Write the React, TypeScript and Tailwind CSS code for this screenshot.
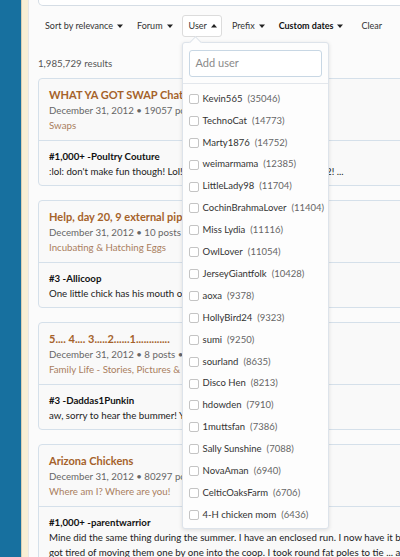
import React from "react";

const FONT = "font-['Segoe_UI','Lato','Noto_Sans',sans-serif]";

const users: [string, string][] = [
  ["Kevin565", "35046"],
  ["TechnoCat", "14773"],
  ["Marty1876", "14752"],
  ["weimarmama", "12385"],
  ["LittleLady98", "11704"],
  ["CochinBrahmaLover", "11404"],
  ["Miss Lydia", "11116"],
  ["OwlLover", "11054"],
  ["JerseyGiantfolk", "10428"],
  ["aoxa", "9378"],
  ["HollyBird24", "9323"],
  ["sumi", "9250"],
  ["sourland", "8635"],
  ["Disco Hen", "8213"],
  ["hdowden", "7910"],
  ["1muttsfan", "7386"],
  ["Sally Sunshine", "7088"],
  ["NovaAman", "6940"],
  ["CelticOaksFarm", "6706"],
  ["4-H chicken mom", "6436"],
];

interface Result {
  title: string;
  meta: string;
  forum: string;
  post: string;
  lines: string[];
}

const results: Result[] = [
  {
    title: "WHAT YA GOT SWAP Chat Thread - Part 12",
    meta: "December 31, 2012 • 19057 posts • 201,395 views",
    forum: "Swaps",
    post: "#1,000+ -Poultry Couture",
    lines: [":lol: don't make fun though! Lol! Happy New Year to you all, 2013 2! ..."],
  },
  {
    title: "Help, day 20, 9 external pips",
    meta: "December 31, 2012 • 10 posts • 849 views",
    forum: "Incubating & Hatching Eggs",
    post: "#3 -Allicoop",
    lines: ["One little chick has his mouth out of the shell and is breathing."],
  },
  {
    title: "5.... 4.... 3.....2......1.............",
    meta: "December 31, 2012 • 8 posts • 855 views",
    forum: "Family Life - Stories, Pictures & Updates",
    post: "#3 -Daddas1Punkin",
    lines: ["aw, sorry to hear the bummer! You have a good new year!"],
  },
  {
    title: "Arizona Chickens",
    meta: "December 31, 2012 • 80297 posts • 2,011,364 views",
    forum: "Where am I? Where are you!",
    post: "#1,000+ -parentwarrior",
    lines: [
      "Mine did the same thing during the summer. I have an enclosed run. I now have it blocked off so they",
      "got tired of moving them one by one into the coop. I took round fat poles to tie ... and more",
    ],
  },
];

const Caret = ({ up = false }: { up?: boolean }) => (
  <svg width="6" height="4" viewBox="0 0 6 4" className="ml-[4px] shrink-0">
    {up ? <path d="M0 3.5 L3 0 L6 3.5 Z" fill="#222" /> : <path d="M0 0.5 L6 0.5 L3 4 Z" fill="#222" />}
  </svg>
);

const UserDropdown = () => (
  <div className="absolute left-[-1px] top-[26px] w-[147px] h-[487px] bg-[#fdfdfd] border border-[#dde3ea] rounded-[3px] shadow-[0_1px_4px_rgba(0,0,0,0.12)] z-10">
    <div className="absolute left-[8px] top-[-5px] w-[9px] h-[9px] rotate-45 bg-[#fdfdfd] border-l border-t border-[#dde3ea]" />
    <div className="px-[6px] pt-[7px] pb-[6px] border-b border-[#e3e7ec]">
      <div className="h-[27px] border border-[#c8d7e4] rounded-[3px] bg-white flex items-center px-[6px] text-[11px] text-[#8a8a8a]">
        Add user
      </div>
    </div>
    <div className="pt-[4px]">
      {users.map(([name, count]) => (
        <div key={name} className="h-[21.9px] flex items-center pl-[6px] text-[9.5px] whitespace-nowrap">
          <span className="w-[10px] h-[10px] shrink-0 border border-[#c4c4c4] rounded-[2px] bg-white mr-[4px]" />
          <span className="text-[#333]">{name}</span>
          <span className="text-[#666] ml-[5px]">({count})</span>
        </div>
      ))}
    </div>
  </div>
);

const FilterBar = () => (
  <div className="h-[22px] mt-[9px] flex items-center text-[9px] text-[#333] pl-[7px] whitespace-nowrap">
    <div className="flex items-center">Sort by relevance<Caret /></div>
    <div className="flex items-center ml-[14px]">Forum<Caret /></div>
    <div className="relative ml-[9px] h-[22px] flex items-center pl-[6px] pr-[4px] border border-[#dcdcdc] rounded-[3px] bg-white">
      User<Caret up />
      <UserDropdown />
    </div>
    <div className="flex items-center ml-[10px]">Prefix<Caret /></div>
    <div className="flex items-center ml-[14px] font-bold text-[#111]">Custom dates<Caret /></div>
    <div className="ml-[18px]">Clear</div>
  </div>
);

const ResultCard = ({ r }: { r: Result }) => (
  <div className="w-[600px] border border-[#d5e0ea] rounded-[4px] bg-[#f9f9f9] mb-[14px] whitespace-nowrap">
    <div className="pl-[10px] pt-[8px] pb-[7px] border-b border-[#d5e0ea]">
      <div className="text-[11px] leading-[16px] font-bold text-[#a5622a]">{r.title}</div>
      <div className="text-[9.7px] leading-[15px] text-[#666]">{r.meta}</div>
      <div className="text-[9.7px] leading-[15px] text-[#a97e5e]">{r.forum}</div>
    </div>
    <div className="pl-[10px] pt-[8px] pb-[6px]">
      <div className="text-[9.7px] leading-[15px] font-bold text-[#111]">{r.post}</div>
      {r.lines.map((l) => (
        <div key={l} className="text-[9.7px] leading-[15px] text-[#222]">{l}</div>
      ))}
    </div>
  </div>
);

export default function App() {
  return (
    <div className={`w-[400px] h-[557px] overflow-hidden flex bg-[#fbfbfb] ${FONT}`}>
      <div className="w-[21px] shrink-0 bg-[#17709f]" />
      <div className="w-[1px] shrink-0 bg-[#d8cfb4]" />
      <div className="w-[6px] shrink-0 bg-[#f8efd5]" />
      <div className="w-[1px] shrink-0 bg-[#e6e6e6]" />
      <div className="flex-1 min-w-0 pl-[9px]">
        <div className="w-[600px] h-[6px] border-x border-b border-[#d5dde5] rounded-b-[5px] bg-white" />
        <FilterBar />
        <div className="mt-[19px] text-[9.7px] leading-[15px] text-[#555]">1,985,729 results</div>
        <div className="mt-[7px]">
          {results.map((r) => (
            <ResultCard key={r.title} r={r} />
          ))}
        </div>
      </div>
    </div>
  );
}
